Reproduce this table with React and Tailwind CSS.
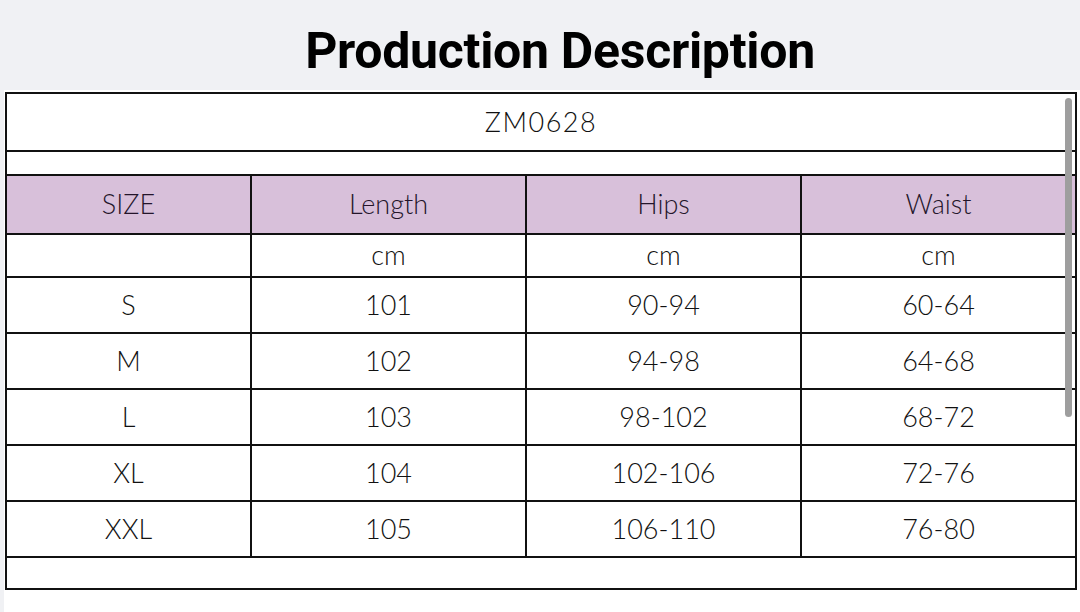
const rows = [
  ['S', '101', '90-94', '60-64'],
  ['M', '102', '94-98', '64-68'],
  ['L', '103', '98-102', '68-72'],
  ['XL', '104', '102-106', '72-76'],
  ['XXL', '105', '106-110', '76-80'],
];

const cols = 'grid grid-cols-[243px_275px_275px_1fr]';

const App = () => {
  return (
    <div className="w-[1080px] h-[612px] bg-[#f0f1f4] overflow-hidden flex flex-col">
      <div className="h-[90px] flex items-center justify-center pl-[40px] pt-[12px]">
        <h1 className="text-[50px] font-bold text-black tracking-[-0.3px]" style={{ fontFamily: 'Roboto, sans-serif' }}>
          Production Description
        </h1>
      </div>

      <div className="relative flex-1 bg-white ml-[4px] pt-[2px] pl-[1px] pr-[3px]">
        <div
          className="border-2 border-[#111] text-[27px] font-light text-[#111]"
          style={{ fontFamily: 'Lato, "Open Sans", sans-serif' }}
        >
          <div className="h-[58px] border-b-2 border-[#111] flex items-center justify-center tracking-[1.5px]">ZM0628</div>
          <div className="h-[24px] border-b-2 border-[#111]"></div>

          {/* header row */}
          <div className={`${cols} h-[59px] bg-[#d8c0da] text-[#24152a] border-b-2 border-[#111]`}>
            {['SIZE', 'Length', 'Hips', 'Waist'].map((h, i) => (
              <div key={h} className={`flex items-center justify-center ${i > 0 ? 'border-l-2 border-[#111]' : ''}`}>{h}</div>
            ))}
          </div>

          {/* units row */}
          <div className={`${cols} h-[43px] border-b-2 border-[#111]`}>
            {['', 'cm', 'cm', 'cm'].map((u, i) => (
              <div key={i} className={`flex items-center justify-center pb-[2px] ${i > 0 ? 'border-l-2 border-[#111]' : ''}`}>{u}</div>
            ))}
          </div>

          {rows.map(r => (
            <div key={r[0]} className={`${cols} h-[56px] border-b-2 border-[#111]`}>
              {r.map((c, i) => (
                <div key={i} className={`flex items-center justify-center ${i > 0 ? 'border-l-2 border-[#111]' : ''}`}>{c}</div>
              ))}
            </div>
          ))}

          <div className="h-[30px]"></div>
        </div>

        {/* scrollbar thumb */}
        <div className="absolute left-[1061px] top-[8px] w-[7px] h-[319px] rounded-full bg-[#9e9e9e]"></div>
      </div>
    </div>
  );
};

export default App;
